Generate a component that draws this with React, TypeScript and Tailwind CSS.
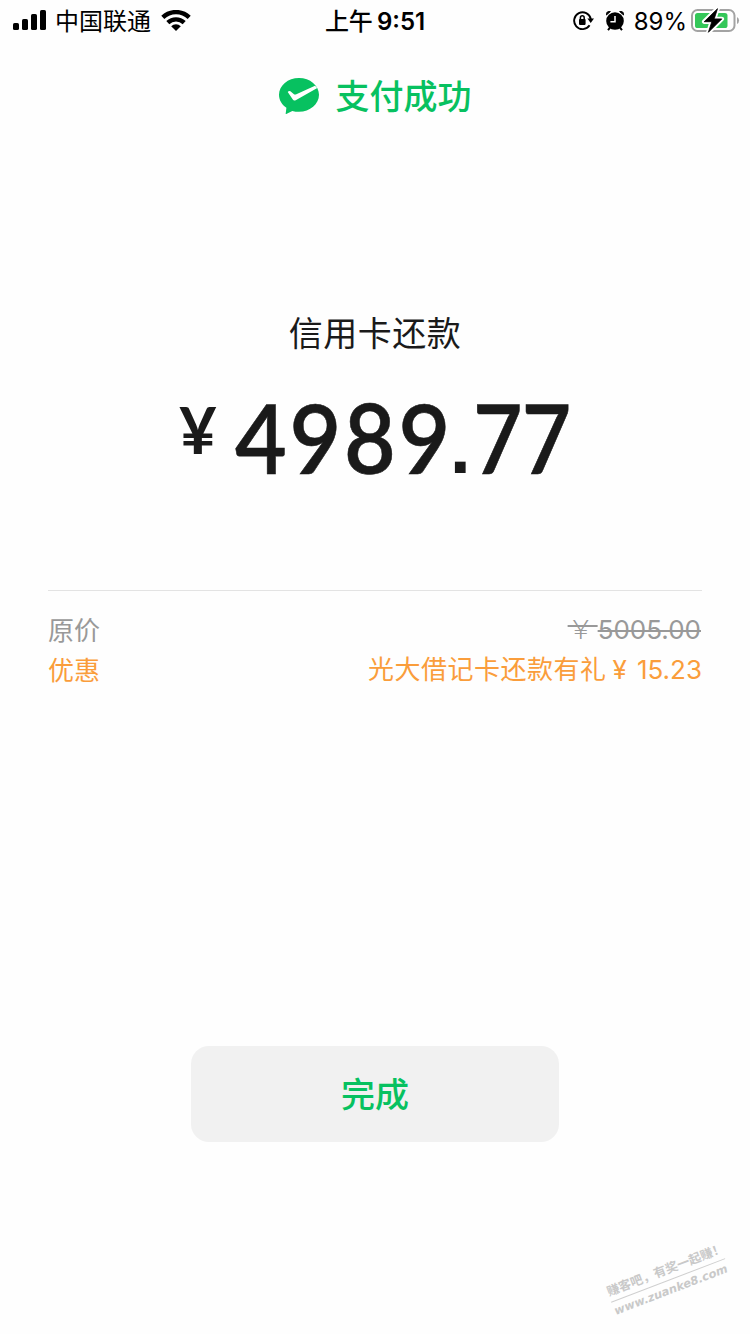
import React from 'react';

const rows = [
  { label: '原价', note: '', value: '5005.00', struck: true },
  { label: '优惠', note: '光大借记卡还款有礼', value: '15.23', struck: false },
];

const SignalIcon = () => (
  <svg width="34" height="22" viewBox="0 0 34 22" fill="#000">
    <rect x="0" y="13" width="6" height="7" rx="1.6" />
    <rect x="9" y="9" width="6" height="11" rx="1.6" />
    <rect x="18" y="4" width="6" height="16" rx="1.6" />
    <rect x="27" y="0" width="6" height="20" rx="1.6" />
  </svg>
);

const WifiIcon = () => (
  <svg width="30" height="22" viewBox="0 0 30 22" fill="none" stroke="#000" strokeWidth="4.4">
    <path d="M1.8 7.4a19 19 0 0 1 26.4 0" />
    <path d="M6.8 12.6a12 12 0 0 1 16.4 0" />
    <path d="M15 20.9l-4.8-4.6a6.8 6.8 0 0 1 9.6 0z" fill="#000" stroke="none" />
  </svg>
);

const RotationLockIcon = () => (
  <svg width="22" height="20" viewBox="0 0 22 20" fill="none" stroke="#000">
    <path d="M16.6 14.3A8.4 8.4 0 1 1 17.8 8.1" strokeWidth="1.9" />
    <path d="M14.4 7.5h6.6l-3.3 4.6z" fill="#000" stroke="none" />
    <rect x="6" y="7.9" width="6.6" height="6" rx="0.8" fill="#000" stroke="none" />
    <path d="M7.4 8.5V6.7a1.9 1.9 0 0 1 3.8 0v1.800" strokeWidth="1.5" />
  </svg>
);

const AlarmIcon = () => (
  <svg width="18" height="20" viewBox="0 0 18 20">
    <circle cx="9" cy="10" r="8.8" />
    <path d="M0.4 4A3 3 0 0 1 4.4 0.5zM17.6 4A3 3 0 0 0 13.6 0.5z" stroke="#000" />
    <path d="M4.4 16.2L2 19.2M13.6 16.2l2.4 3" stroke="#000" strokeWidth="2" />
    <path d="M9 5v5.8H4.4" fill="none" stroke="#fff" strokeWidth="1.5" />
  </svg>
);

const BatteryIcon = () => (
  <svg width="49" height="28" viewBox="0 0 49 28">
    <rect x="1" y="3" width="42.5" height="21" rx="5.6" fill="none" stroke="#a3a3a3" strokeWidth="2" />
    <path d="M46 10v7a4 4 0 0 0 0-7z" fill="#a3a3a3" />
    <rect x="4" y="6" width="32.5" height="15" rx="2.6" fill="#34c759" />
    <path d="M26.5 1.7L13.2 14.7h7.6l-3.4 10.6 13.4-13.4h-7.6z" fill="#000" stroke="#fff" strokeWidth="4.5" strokeLinejoin="round" />
    <path d="M26.5 1.7L13.2 14.7h7.6l-3.4 10.6 13.4-13.4h-7.6z" fill="#000" stroke="#000" strokeWidth="0.8" />
  </svg>
);

const PayLogo = () => (
  <svg width="40" height="36" viewBox="0 0 40 36">
    <path
      d="M20 0C8.9 0 0 7.5 0 16.8c0 5.3 2.9 10 7.4 13L6.7 35.6a.4.4 0 0 0 .6.4l6-3.1c2.1.6 4.3.9 6.7.9 11 0 20-7.6 20-17C40 7.5 31 0 20 0z"
      fill="#07c160"
    />
    <path d="M8.7 13.9q1.3-1.6 2.7-.7l3.9 3.2q.7.4 1.5 0L36 7.7l2.3 2.2-21.6 12.3q-2 1-2.9-.8z" fill="#fff" />
  </svg>
);

const StatusBar = () => (
  <div className="h-10 grid grid-cols-[1fr_auto_1fr] items-center text-black">
    <div className="flex items-center pl-[13px]">
      <SignalIcon />
      <span className="ml-2 mr-2.5 pt-0.5 text-[24px] leading-10">中国联通</span>
      <WifiIcon />
    </div>
    <div className="flex items-center gap-1 pt-0.5 font-medium">
      <span className="text-[24px] leading-10">上午</span>
      <span className="text-[24px] leading-10 font-semibold">9:51</span>
    </div>
    <div className="flex items-center justify-end pr-2.5">
      <RotationLockIcon />
      <span className="ml-[11px] mr-2.5"><AlarmIcon /></span>
      <span className="mr-1 pt-px text-[24px] leading-10">89%</span>
      <BatteryIcon />
    </div>
  </div>
);

export default function App() {
  return (
    <div className="relative w-[750px] h-[1334px] overflow-hidden bg-[#fefefe] text-[#1a1a1a] font-[Inter,'Noto_Sans_CJK_SC',sans-serif]">
      <StatusBar />

      <div className="mt-8 h-12 flex items-center justify-center gap-[17px] text-[#07c160]">
        <PayLogo />
        <h1 className="pt-0.5 text-[34px] leading-[48px] font-medium">支付成功</h1>
      </div>

      <div className="mt-[190px] text-center text-[34px] leading-[48px] tracking-[0.5px]">信用卡还款</div>

      <div className="mt-5 h-[118px] pl-[179px] flex items-start font-[Lato,sans-serif] font-semibold text-[97px] leading-[117px]">
        <span className="mt-[10px] mr-[18px] text-[65px] leading-[82px] font-bold">¥</span>
        <span className="inline-block origin-left scale-x-[0.92] mr-[-23px] tracking-[3px] [-webkit-text-stroke:0.6px_#1a1a1a]">4989</span>
        <span className="ml-px text-[76px] font-['Liberation_Sans'] font-bold leading-[137px]">.</span>
        <span className="ml-0.5 inline-block origin-left scale-x-[0.88] tracking-[-1px] [-webkit-text-stroke:0.6px_#1a1a1a]">77</span>
      </div>

      <div className="mx-12 mt-[94px] border-t border-[#e3e3e3] pt-5">
        {rows.map((row) => (
          <div
            key={row.label}
            className={`h-10 flex justify-between text-[26px] leading-10 ${row.struck ? 'text-[#999999]' : 'text-[#fa9d3b]'}`}
          >
            <span>{row.label}</span>
            {row.struck ? (
              <span className="-mt-px mr-px line-through decoration-2">
                <span className="font-['Noto_Sans_CJK_SC'] font-light leading-none tracking-[4px]">￥</span>
                {row.value}
              </span>
            ) : (
              <span className="-mt-px">
                <span className="tracking-[0.5px]">{row.note}</span>
                <span className="ml-1.5 mr-2.5">¥</span>
                {row.value}
              </span>
            )}
          </div>
        ))}
      </div>

      <div className="mt-[355px] flex justify-center">
        <button className="w-[368px] h-24 rounded-[18px] bg-[#f1f1f1] text-[34px] font-medium text-[#07c160]">完成</button>
      </div>

      {/* site stamp lies tilted over the bottom corner */}
      <div className="absolute left-[607px] top-[1261px] w-[122px] -rotate-[21deg] font-bold text-[#c9c9c9]">
        <div className="border-b border-[#cfcfcf] pb-px text-[12.5px] leading-[18px] whitespace-nowrap">赚客吧，有奖一起赚！</div>
        <div className="text-[11.5px] leading-[18px] italic font-['DejaVu_Sans']">www.zuanke8.com</div>
      </div>
    </div>
  );
}
